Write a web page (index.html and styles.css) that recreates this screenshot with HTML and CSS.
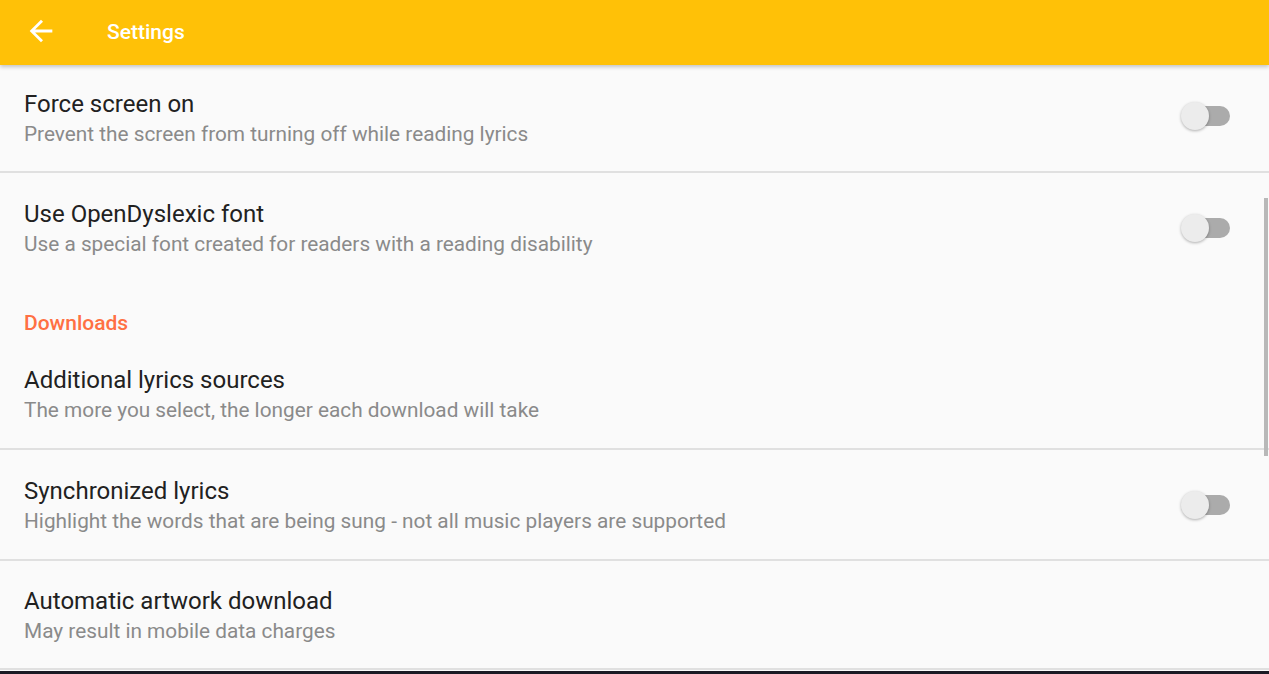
FILE: index.html
```html
<!DOCTYPE html>
<html>
<head>
<meta charset="utf-8">
<link rel="stylesheet" href="styles.css">
</head>
<body>
<div class="screen">
  <header class="appbar">
    <svg class="back" viewBox="0 0 24 24" width="34" height="34"><path d="M20 11H7.83l5.59-5.59L12 4l-8 8 8 8 1.41-1.41L7.83 13H20v-2z" fill="#fff"/></svg>
    <div class="appbar-title">Settings</div>
  </header>
  <main class="list">
    <div class="item item-first">
      <div class="text">
        <div class="title">Force screen on</div>
        <div class="summary">Prevent the screen from turning off while reading lyrics</div>
      </div>
      <div class="switch"><span class="track"></span><span class="thumb"></span></div>
    </div>
    <div class="divider"></div>
    <div class="item">
      <div class="text">
        <div class="title">Use OpenDyslexic font</div>
        <div class="summary">Use a special font created for readers with a reading disability</div>
      </div>
      <div class="switch"><span class="track"></span><span class="thumb"></span></div>
    </div>
    <div class="category">Downloads</div>
    <div class="item">
      <div class="text">
        <div class="title">Additional lyrics sources</div>
        <div class="summary">The more you select, the longer each download will take</div>
      </div>
    </div>
    <div class="divider"></div>
    <div class="item">
      <div class="text">
        <div class="title">Synchronized lyrics</div>
        <div class="summary">Highlight the words that are being sung - not all music players are supported</div>
      </div>
      <div class="switch"><span class="track"></span><span class="thumb"></span></div>
    </div>
    <div class="divider"></div>
    <div class="item item-last">
      <div class="text">
        <div class="title">Automatic artwork download</div>
        <div class="summary">May result in mobile data charges</div>
      </div>
    </div>
    <div class="divider"></div>
  </main>
  <div class="navstrip"></div>
  <div class="scrollbar"></div>
</div>
</body>
</html>
```

FILE: styles.css
```css
* { box-sizing: border-box; }
html, body { margin: 0; padding: 0; }
body {
  width: 1269px;
  height: 674px;
  overflow: hidden;
  background: #fafafa;
  font-family: Roboto, "Noto Sans", sans-serif;
}
.screen {
  position: relative;
  width: 1269px;
  height: 674px;
  display: flex;
  flex-direction: column;
  background: #fafafa;
}
.appbar {
  position: relative;
  z-index: 2;
  height: 65px;
  flex: none;
  background: #ffc107;
  display: flex;
  align-items: center;
  padding-left: 24px;
  box-shadow: 0 2px 4px rgba(0,0,0,0.22);
}
.back { display: block; margin-top: -3px; }
.appbar-title {
  margin-left: 49px;
  color: #fff;
  font-size: 21px;
  font-weight: 500;
  margin-top: -2px;
}
.list {
  flex: 1;
  display: flex;
  flex-direction: column;
}
.item {
  height: 109px;
  display: flex;
  align-items: center;
  padding: 0 39px 0 24px;
}
.item-first { height: 106px; padding-bottom: 2px; }
.item-first .switch { margin-top: -2px; }
.item-last { height: 107px; }
.text {
  flex: 1;
  display: flex;
  flex-direction: column;
  padding-top: 3px;
}
.title {
  font-size: 24px;
  line-height: 30px;
  color: #212121;
}
.summary {
  font-size: 20.8px;
  line-height: 30px;
  color: #8a8a8a;
}
.divider {
  height: 2px;
  background: #e0e0e0;
  flex: none;
}
.category {
  height: 57px;
  padding: 29px 24px 0;
  font-size: 21px;
  line-height: 24px;
  font-weight: 500;
  color: #ff7043;
}
.switch {
  position: relative;
  width: 49px;
  height: 30px;
  flex: none;
}
.track {
  position: absolute;
  left: 13px;
  top: 5px;
  width: 36px;
  height: 20px;
  border-radius: 10px;
  background: #ababab;
}
.thumb {
  position: absolute;
  left: 0;
  top: 1px;
  width: 28px;
  height: 28px;
  border-radius: 50%;
  background: #ececec;
  box-shadow: 0 1px 3px rgba(0,0,0,0.3);
}
.navstrip {
  height: 3px;
  background: #1b1a24;
  flex: none;
}
.scrollbar {
  position: absolute;
  left: 1264px;
  top: 198px;
  width: 4px;
  height: 258px;
  background: #b8b8b8;
}
```
